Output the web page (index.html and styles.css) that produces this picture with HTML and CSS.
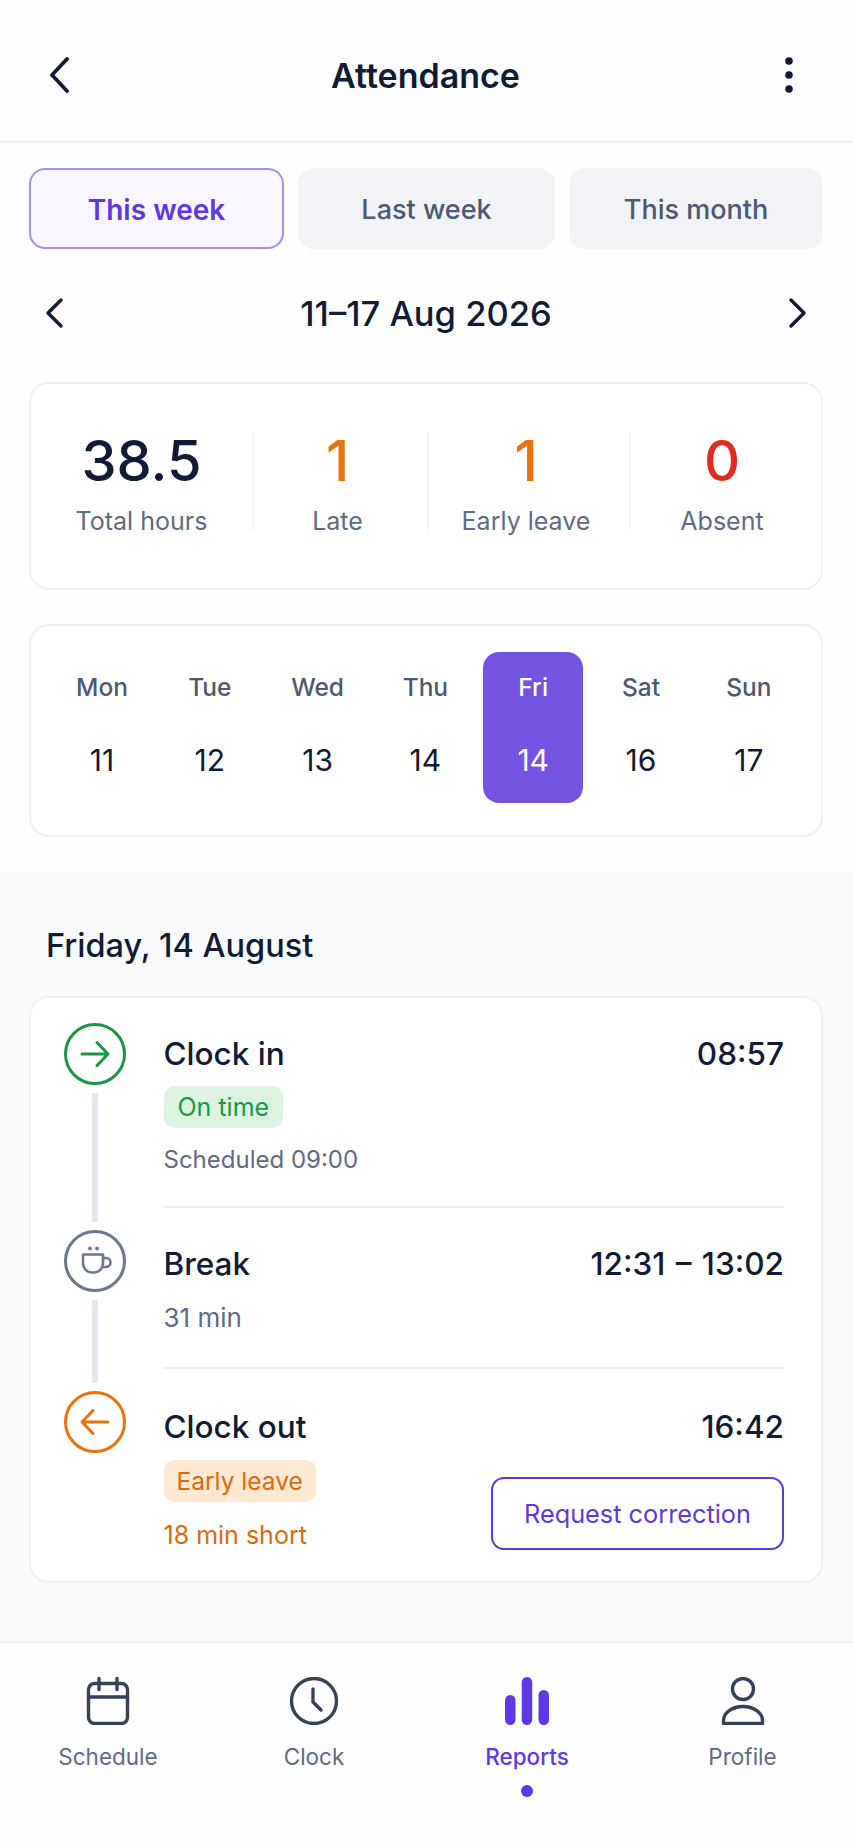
FILE: index.html
```html
<!DOCTYPE html>
<html lang="en">
<head>
<meta charset="utf-8">
<title>Attendance</title>
<link rel="stylesheet" href="styles.css">
</head>
<body>
<div class="app">
  <header class="topbar">
    <svg class="top-icon" viewBox="0 0 36 36" width="36" height="36"><path d="M23 2 8 18l15 16"/></svg>
    <h1 class="title">Attendance</h1>
    <svg class="top-icon" viewBox="0 0 36 36" width="36" height="36"><circle class="solid" cx="18" cy="4" r="3.800"/><circle class="solid" cx="18" cy="18" r="3.800"/><circle class="solid" cx="18" cy="32" r="3.800"/></svg>
  </header>

  <div class="upper">
    <nav class="tabs">
      <button class="tab tab-active">This week</button>
      <button class="tab">Last week</button>
      <button class="tab">This month</button>
    </nav>

    <div class="week">
      <svg class="week-icon" viewBox="0 0 24 32" width="24" height="32"><path d="M19 3 6 16l13 13"/></svg>
      <div class="week-label">11–17 Aug 2026</div>
      <svg class="week-icon" viewBox="0 0 24 32" width="24" height="32"><path d="M5 3l13 13L5 29"/></svg>
    </div>

    <section class="card stats">
      <div class="stat"><div class="stat-value">38.5</div><div class="stat-label">Total hours</div></div>
      <div class="stat"><div class="stat-value orange">1</div><div class="stat-label">Late</div></div>
      <div class="stat"><div class="stat-value orange">1</div><div class="stat-label">Early leave</div></div>
      <div class="stat"><div class="stat-value red">0</div><div class="stat-label">Absent</div></div>
    </section>

    <section class="card days">
      <div class="day"><div class="dow">Mon</div><div class="num">11</div></div>
      <div class="day"><div class="dow">Tue</div><div class="num">12</div></div>
      <div class="day"><div class="dow">Wed</div><div class="num">13</div></div>
      <div class="day"><div class="dow">Thu</div><div class="num">14</div></div>
      <div class="day day-active"><div class="dow">Fri</div><div class="num">14</div></div>
      <div class="day"><div class="dow">Sat</div><div class="num">16</div></div>
      <div class="day"><div class="dow">Sun</div><div class="num">17</div></div>
    </section>
  </div>

  <main class="detail">
    <h2 class="detail-title">Friday, 14 August</h2>
    <section class="card timeline">
      <article class="event event-in">
        <div class="rail">
          <svg class="node green" viewBox="0 0 62 62" width="62" height="62"><circle cx="31" cy="31" r="29.5"/><path d="M18 31h26M33 19.5 44 31 33 42.5"/></svg>
          <div class="connector"></div>
        </div>
        <div class="body body-rule">
          <div class="head"><span class="name">Clock in</span><span class="time">08:57</span></div>
          <span class="badge badge-green">On time</span>
          <div class="note note-sched">Scheduled 09:00</div>
        </div>
      </article>
      <article class="event event-break">
        <div class="rail">
          <svg class="node slate" viewBox="0 0 62 62" width="62" height="62"><circle cx="31" cy="31" r="29.5"/><path class="thin" d="M19 24.5h20v9a9 9 0 0 1-9 9h-2a9 9 0 0 1-9-9zM39 28h3a4.5 4.5 0 0 1 0 9h-3"/><circle class="solid-slate" cx="26" cy="18.5" r="1.9"/><circle class="solid-slate" cx="33" cy="18.5" r="1.9"/></svg>
          <div class="connector"></div>
        </div>
        <div class="body body-rule">
          <div class="head"><span class="name">Break</span><span class="time time-range">12:31 – 13:02</span></div>
          <div class="note note-break">31 min</div>
        </div>
      </article>
      <article class="event event-out">
        <div class="rail">
          <svg class="node amber" viewBox="0 0 62 62" width="62" height="62"><circle cx="31" cy="31" r="29.5"/><path d="M44 31H18M29 19.5 18 31l11 11.5"/></svg>
        </div>
        <div class="body">
          <div class="head"><span class="name">Clock out</span><span class="time">16:42</span></div>
          <div class="foot">
            <div>
              <span class="badge badge-amber">Early leave</span>
              <div class="note note-amber">18 min short</div>
            </div>
            <button class="correct">Request correction</button>
          </div>
        </div>
      </article>
    </section>
  </main>

  <nav class="bottom">
    <div class="nav-item">
      <svg class="nav-icon" viewBox="0 0 48 48" width="48" height="48"><rect x="4.5" y="6.5" width="39" height="40" rx="6"/><path d="M4.500 20h39M15 1.500v11M33 1.500v11"/></svg>
      <span class="nav-label">Schedule</span>
    </div>
    <div class="nav-item">
      <svg class="nav-icon" viewBox="0 0 48 48" width="48" height="48"><circle cx="24" cy="24" r="22.5"/><path d="M23 12v13l8 8"/></svg>
      <span class="nav-label">Clock</span>
    </div>
    <div class="nav-item nav-active">
      <svg class="nav-icon bars" viewBox="0 0 48 48" width="48" height="48"><rect x="2" y="18" width="10.5" height="30" rx="5.2"/><rect x="18.7" y="0" width="10.5" height="48" rx="5.2"/><rect x="35.5" y="13" width="10.5" height="35" rx="5.2"/></svg>
      <span class="nav-label">Reports</span>
      <span class="nav-dot"></span>
    </div>
    <div class="nav-item">
      <svg class="nav-icon" viewBox="0 0 48 48" width="48" height="48"><circle cx="24" cy="12" r="10.5"/><path d="M4.500 46.500v-3a19.500 14 0 0 1 39 0v3z"/></svg>
      <span class="nav-label">Profile</span>
    </div>
  </nav>
</div>
</body>
</html>
```

FILE: styles.css
```css
* { box-sizing: border-box; }
html, body { margin: 0; padding: 0; }
body {
  width: 853px;
  height: 1844px;
  background: #fefefe;
  color: #111b36;
  font-family: Inter, "Liberation Sans", sans-serif;
  overflow: hidden;
}
svg { display: block; fill: none; }
button { font-family: inherit; cursor: pointer; }
.app { display: flex; flex-direction: column; height: 1844px; }

.topbar {
  height: 143px;
  padding: 8px 46px 0 44px;
  border-bottom: 2px solid #f0f1f5;
  display: flex;
  align-items: center;
  justify-content: space-between;
}
.top-icon path { stroke: #111b36; stroke-width: 3.8; stroke-linecap: round; stroke-linejoin: round; }
.solid { fill: #111b36; }
.title { margin: 2px 0 0; font-size: 34px; line-height: 40px; font-weight: 600; }

.upper { padding: 25px 30px 35px 29px; }
.tabs { display: grid; grid-template-columns: 255px 257px 254px; column-gap: 14px; }
.tab {
  height: 81px;
  padding: 2px 0 0;
  border: 0;
  border-radius: 16px;
  background: #f1f3f6;
  color: #4d5872;
  font-size: 27px;
  font-weight: 500;
}
.tab-active {
  background: #f9f6ff;
  border: 2px solid #a88cf3;
  color: #5f38e6;
  font-size: 28px;
  font-weight: 600;
}

.week {
  margin-top: 48px;
  height: 32px;
  padding: 0 13px;
  display: flex;
  align-items: center;
  justify-content: space-between;
}
.week-icon path { stroke: #111b36; stroke-width: 3.4; stroke-linecap: round; stroke-linejoin: round; }
.week-label { margin-top: 2px; font-size: 34.5px; line-height: 40px; font-weight: 500; }

.card {
  background: #fff;
  border: 2px solid #f0f1f5;
  border-radius: 20px;
}
.stats {
  margin-top: 53px;
  height: 208px;
  padding: 48px 0 0;
  display: grid;
  grid-template-columns: 223px 175px 202px 190px;
  align-items: start;
}
.stat {
  height: 97px;
  padding-right: 6px;
  text-align: center;
  border-right: 2px solid #f0f1f5;
}
.stat:first-child { padding-right: 0; }
.stat:last-child { border-right: 0; padding-right: 8px; }
.stat-value { padding-top: 2px; font-size: 56px; line-height: 54px; font-weight: 500; }
.stat-label { margin-top: 18px; font-size: 25px; line-height: 30px; color: #5f6b85; white-space: nowrap; }
.orange { color: #e8750d; }
.red { color: #e4291f; }

.days {
  margin-top: 34px;
  height: 213px;
  padding: 26px 21px;
  display: grid;
  grid-template-columns: repeat(7, 100px);
  column-gap: 7.800px;
}
.day { height: 151px; border-radius: 16px; padding-top: 20px; text-align: center; }
.dow { font-size: 24.500px; line-height: 30px; font-weight: 500; color: #4d5872; }
.num { margin-top: 43px; font-size: 30px; line-height: 30px; font-weight: 400; }
.day-active { background: #7453e2; }
.day-active .dow, .day-active .num { color: #fff; }

.detail {
  flex: 1;
  background: #f9fafc;
  padding: 56px 30px 0 29px;
}
.detail-title { margin: 0 0 32px 17px; font-size: 32.500px; line-height: 36px; font-weight: 500; }
.timeline { height: 587px; padding: 25px 37px 0 33px; }
.event { display: flex; column-gap: 37.500px; }
.rail { width: 62px; flex: none; display: flex; flex-direction: column; align-items: center; }
.node circle:first-child { stroke-width: 3; }
.node path { stroke-width: 3; stroke-linecap: round; stroke-linejoin: round; }
.green circle, .green path { stroke: #1b9546; }
.slate circle, .slate path { stroke: #6b7890; }
.amber circle, .amber path { stroke: #ea730c; }
.slate .thin { stroke-width: 2.6; }
.slate .solid-slate { fill: #6b7890; stroke: none; }
.connector { flex: 1; width: 6px; margin: 8px 0 8px; background: #e2e6ee; }
.body { flex: 1; min-width: 0; }
.body-rule { margin-bottom: 22px; border-bottom: 2px solid #f0f1f5; }
.event-in .body { padding: 15px 0 31px; }
.event-break .body { padding: 18px 0 34px; }
.event-out .body { padding: 20px 0 0; }
.head { display: flex; justify-content: space-between; align-items: center; height: 30px; }
.name { font-size: 31.500px; font-weight: 550; }
.time { font-size: 31.500px; font-weight: 550; }
.time-range { word-spacing: 2px; }
.badge {
  display: inline-flex;
  align-items: center;
  height: 42px;
  margin-top: 18px;
  padding: 0 14px;
  border-radius: 10px;
  font-size: 25px;
  font-weight: 400;
  vertical-align: top;
}
.badge-green { background: #dcf3e2; color: #179a45; }
.badge-amber { background: #fde9d2; color: #e0680f; margin-top: 19px; padding: 0 13px; font-size: 24.500px; }
.note { margin-top: 17px; font-size: 25px; line-height: 30px; color: #5f6b85; }
.note-sched { font-size: 24px; }
.note-break { margin-top: 25px; font-size: 26px; }
.note-amber { margin-top: 18px; color: #e0680f; }
.foot { display: flex; justify-content: space-between; align-items: flex-end; }
.correct {
  width: 293px;
  height: 73px;
  background: #fff;
  border: 2px solid #5f38e6;
  border-radius: 13px;
  color: #5f38e6;
  font-size: 25.300px;
  font-weight: 400;
}

.bottom {
  height: 203px;
  padding-top: 34px;
  border-top: 2px solid #f0f1f5;
  display: grid;
  grid-template-columns: 216px 196px 230px 201px;
  background: #fefefe;
}
.nav-item { display: flex; flex-direction: column; align-items: center; }
.nav-icon rect, .nav-icon circle, .nav-icon path { stroke: #364256; stroke-width: 3.4; stroke-linecap: round; stroke-linejoin: round; }
.bars rect { fill: #5f38e6; stroke: none; }
.nav-label { margin-top: 18px; font-size: 22.500px; line-height: 28px; font-weight: 400; color: #5f6b85; }
.nav-active .nav-label { color: #5f38e6; font-weight: 500; }
.nav-dot { width: 12px; height: 12px; margin-top: 14px; border-radius: 50%; background: #5f38e6; }
```
